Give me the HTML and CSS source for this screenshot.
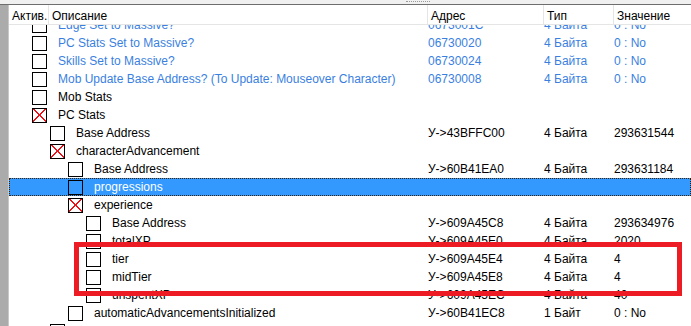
FILE: index.html
```html
<!DOCTYPE html>
<html lang="ru">
<head>
  <meta charset="UTF-8" />
  <title>Cheat Table</title>
  <link rel="stylesheet" href="styles.css">
</head>
<body>
  <div class="splitter"><span class="grip"></span></div>
  <div class="frame">
    <div class="side"></div>
    <div class="list">
      <div class="head">
        <div class="hc">Актив.</div>
        <div class="hc">Описание</div>
        <div class="hc">Адрес</div>
        <div class="hc">Тип</div>
        <div class="hc last">Значение</div>
      </div>
      <div class="rows">
        <div class="row blue first">
          <div class="desc lv0"><span class="box"></span>Edge Set to Massive?</div>
          <div>0673001C</div><div>4 Байта</div><div>0 : No</div>
        </div>
        <div class="row blue">
          <div class="desc lv0"><span class="box"></span>PC Stats Set to Massive?</div>
          <div>06730020</div><div>4 Байта</div><div>0 : No</div>
        </div>
        <div class="row blue">
          <div class="desc lv0"><span class="box"></span>Skills Set to Massive?</div>
          <div>06730024</div><div>4 Байта</div><div>0 : No</div>
        </div>
        <div class="row blue">
          <div class="desc lv0"><span class="box"></span>Mob Update Base Address? (To Update: Mouseover Character)</div>
          <div>06730008</div><div>4 Байта</div><div>0 : No</div>
        </div>
        <div class="row">
          <div class="desc lv0"><span class="box"></span>Mob Stats</div>
          <div></div><div></div><div></div>
        </div>
        <div class="row">
          <div class="desc lv0"><span class="box on"></span>PC Stats</div>
          <div></div><div></div><div></div>
        </div>
        <div class="row">
          <div class="desc lv1"><span class="box"></span>Base Address</div>
          <div>У-&gt;43BFFC00</div><div>4 Байта</div><div>293631544</div>
        </div>
        <div class="row">
          <div class="desc lv1"><span class="box on"></span>characterAdvancement</div>
          <div></div><div></div><div></div>
        </div>
        <div class="row">
          <div class="desc lv2"><span class="box"></span>Base Address</div>
          <div>У-&gt;60B41EA0</div><div>4 Байта</div><div>293631184</div>
        </div>
        <div class="row selected">
          <div class="desc lv2"><span class="box"></span>progressions</div>
          <div></div><div></div><div></div>
        </div>
        <div class="row">
          <div class="desc lv2"><span class="box on"></span>experience</div>
          <div></div><div></div><div></div>
        </div>
        <div class="row">
          <div class="desc lv3"><span class="box"></span>Base Address</div>
          <div>У-&gt;609A45C8</div><div>4 Байта</div><div>293634976</div>
        </div>
        <div class="row">
          <div class="desc lv3"><span class="box"></span>totalXP</div>
          <div>У-&gt;609A45E0</div><div>4 Байта</div><div>2020</div>
        </div>
        <div class="row">
          <div class="desc lv3"><span class="box"></span>tier</div>
          <div>У-&gt;609A45E4</div><div>4 Байта</div><div>4</div>
        </div>
        <div class="row">
          <div class="desc lv3"><span class="box"></span>midTier</div>
          <div>У-&gt;609A45E8</div><div>4 Байта</div><div>4</div>
        </div>
        <div class="row">
          <div class="desc lv3"><span class="box"></span>unspentXP</div>
          <div>У-&gt;609A45EC</div><div>4 Байта</div><div>40</div>
        </div>
        <div class="row">
          <div class="desc lv2"><span class="box"></span>automaticAdvancementsInitialized</div>
          <div>У-&gt;60B41EC8</div><div>1 Байт</div><div>0 : No</div>
        </div>
        <div class="row">
          <div class="desc lv1"><span class="box"></span>proficiencies</div>
          <div></div><div></div><div></div>
        </div>
      </div>
      <div class="mark"></div>
    </div>
  </div>
</body>
</html>
```

FILE: styles.css
```css
html, body {
  margin: 0;
  height: 100%;
  overflow: hidden;
}
body {
  font-family: 'Liberation Sans', Arial, sans-serif;
  font-size: 12px;
  color: #000;
  background: #fff;
}
.splitter {
  height: 4px;
  background: #f0f0f0;
  border-bottom: 1px solid #6e6e6e;
}
.grip {
  display: block;
  width: 24px;
  margin-left: 406px;
  padding-top: 1px;
  border-bottom: 1px dotted #9a9a9a;
}
.frame {
  display: flex;
  height: 321px;
}
.side {
  width: 8px;
  background: #ababab;
  border-right: 1px solid #c8c8c8;
}
.list {
  position: relative;
  flex: 1;
  overflow: hidden;
}
.head, .row {
  display: grid;
  grid-template-columns: 419px 116px 70px 1fr;
}
.head {
  grid-template-columns: 40px 379px 116px 70px 1fr;
  height: 19px;
  border-bottom: 1px solid #e5e5e5;
}
.hc {
  padding: 4px 0 0 3px;
  border-right: 1px solid #e5e5e5;
  white-space: nowrap;
}
.hc.last {
  border-right: none;
}
.rows {
  height: 301px;
  overflow: hidden;
}
.row {
  height: 18px;
  align-items: center;
  white-space: nowrap;
}
.row.first {
  margin-top: -9px;
}
.row.blue {
  color: #3a7fdf;
}
.row.selected {
  background: #3399ff;
  color: #fff;
  outline: 1px dotted #402000;
  outline-offset: -1px;
}
.desc {
  display: flex;
  align-items: center;
}
.lv0 { padding-left: 23px; }
.lv1 { padding-left: 41px; }
.lv2 { padding-left: 59px; }
.lv3 { padding-left: 77px; }
.box {
  width: 13px;
  height: 13px;
  border: 1px solid #000;
  margin-right: 11px;
  flex: none;
}
.box.on {
  background:
    linear-gradient(45deg, transparent 47%, #e8131b 47%, #e8131b 55%, transparent 55%),
    linear-gradient(-45deg, transparent 47%, #e8131b 47%, #e8131b 55%, transparent 55%);
}
.mark {
  position: absolute;
  left: 65px;
  top: 237px;
  width: 608px;
  height: 54px;
  box-sizing: border-box;
  border: 5px solid #ed1c24;
}
```
